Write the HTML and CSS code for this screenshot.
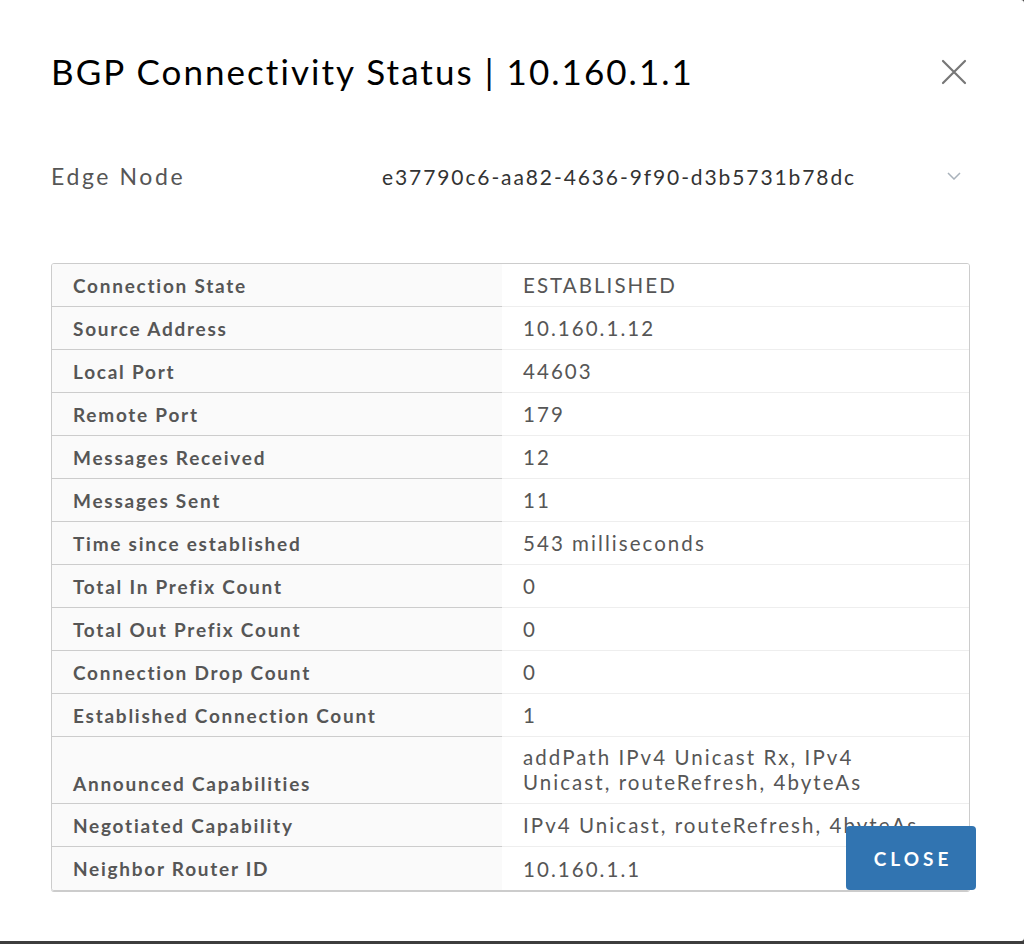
FILE: index.html
```html
<!DOCTYPE html>
<html>
<head>
<meta charset="utf-8">
<link rel="stylesheet" href="styles.css">
</head>
<body>
<div class="modal">
  <div class="modal-header">
    <h1 class="title">BGP Connectivity Status | 10.160.1.1</h1>
    <button class="close-x" aria-label="Close">
      <svg width="26" height="26" viewBox="0 0 26 26"><path d="M2 2 L24 24 M24 2 L2 24" stroke="#777" stroke-width="2.2" stroke-linecap="round" fill="none"/></svg>
    </button>
  </div>
  <div class="select-row">
    <span class="select-label">Edge Node</span>
    <span class="select-value">e37790c6-aa82-4636-9f90-d3b5731b78dc</span>
    <svg class="chevron" width="14" height="8" viewBox="0 0 14 8"><path d="M1 1 L7 7 L13 1" stroke="#a9b2bb" stroke-width="1.5" fill="none"/></svg>
  </div>
  <div class="stack">
    <div class="k">Connection State</div><div class="v">ESTABLISHED</div>
    <div class="k">Source Address</div><div class="v">10.160.1.12</div>
    <div class="k">Local Port</div><div class="v">44603</div>
    <div class="k">Remote Port</div><div class="v">179</div>
    <div class="k">Messages Received</div><div class="v">12</div>
    <div class="k">Messages Sent</div><div class="v">11</div>
    <div class="k">Time since established</div><div class="v">543 milliseconds</div>
    <div class="k">Total In Prefix Count</div><div class="v">0</div>
    <div class="k">Total Out Prefix Count</div><div class="v">0</div>
    <div class="k">Connection Drop Count</div><div class="v">0</div>
    <div class="k">Established Connection Count</div><div class="v">1</div>
    <div class="k tall">Announced Capabilities</div><div class="v tall">addPath IPv4 Unicast Rx, IPv4<br>Unicast, routeRefresh, 4byteAs</div>
    <div class="k">Negotiated Capability</div><div class="v">IPv4 Unicast, routeRefresh, 4byteAs</div>
    <div class="k last">Neighbor Router ID</div><div class="v last">10.160.1.1</div>
  </div>
  <button class="btn-close">CLOSE</button>
</div>
</body>
</html>
```
FILE: styles.css
```css
html, body {
  margin: 0;
  padding: 0;
}
body {
  background: #3d3d3d;
  width: 1024px;
  height: 944px;
  overflow: hidden;
  font-family: "Lato", "Open Sans", sans-serif;
}
.modal {
  position: relative;
  background: #fff;
  width: 1024px;
  height: 941px;
  border-radius: 0 3px 3px 0;
  box-sizing: border-box;
  padding: 0 54px 0 51px;
}
.modal-header {
  display: flex;
  align-items: center;
  justify-content: space-between;
  height: 144px;
}
.title {
  margin: 0;
  font-weight: 400;
  font-size: 35px;
  letter-spacing: 2.05px;
  color: #000;
  line-height: 40px;
  margin-top: -2px;
}
.close-x {
  border: 0;
  background: none;
  padding: 0;
  margin-right: 3px;
  display: flex;
}
.select-row {
  display: flex;
  align-items: center;
  height: 64px;
}
.select-label {
  width: 331px;
  font-size: 23px;
  letter-spacing: 2.6px;
  color: #565656;
}
.select-value {
  flex: 1;
  font-size: 21px;
  letter-spacing: 1.9px;
  color: #333;
}
.chevron {
  margin-right: 9px;
}
.stack {
  margin-top: 55px;
  display: grid;
  grid-template-columns: 450px 1fr;
  border: 1px solid #ccc;
  border-radius: 3px;
  box-shadow: 0 1px 0 #ccc;
  overflow: hidden;
}
.k, .v {
  height: 43px;
  box-sizing: border-box;
  display: flex;
  align-items: center;
}
.k {
  background: #fafafa;
  border-bottom: 1px solid #ccc;
  padding-left: 21px;
  font-weight: 700;
  font-size: 19px;
  letter-spacing: 1.75px;
  color: #565656;
}
.v {
  background: #fff;
  border-bottom: 1px solid #eee;
  padding-left: 21px;
  font-size: 20.5px;
  letter-spacing: 2.05px;
  color: #565656;
  white-space: nowrap;
}
.k.tall, .v.tall {
  height: 67px;
}
.k.tall {
  align-items: flex-end;
  padding-bottom: 8px;
}
.v.tall {
  line-height: 25px;
  white-space: normal;
}
.k.last, .v.last {
  border-bottom: 0;
}
.btn-close {
  position: absolute;
  left: 846px;
  top: 826px;
  width: 130px;
  height: 64px;
  padding: 0 0 0 4px;
  background: #3174b1;
  color: #fff;
  border: 0;
  border-radius: 4px;
  font-family: "Lato", "Open Sans", sans-serif;
  font-weight: 700;
  font-size: 19px;
  letter-spacing: 4px;
}
```
